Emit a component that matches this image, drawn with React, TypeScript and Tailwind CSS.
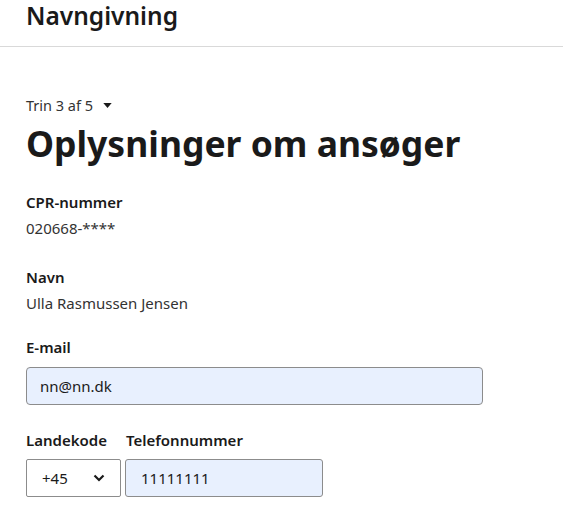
import React from 'react';

const App: React.FC = () => {
    return (
        <div className="min-h-screen bg-white text-[#1a1a1a]" style={{ fontFamily: '"Noto Sans", "Open Sans", Arial, sans-serif' }}>
            {/* Header */}
            <div className="h-[47px] border-b border-[#d9d9d9] px-[26px] pt-[1px]">
                <h1 className="text-[24.5px] font-semibold leading-[30px] text-[#1a1a1a]">Navngivning</h1>
            </div>

            <div className="px-[26px] pt-[48px]">
                {/* Step indicator */}
                <button className="flex items-center gap-[10px] text-[14.5px] leading-[20px] text-[#333]">
                    Trin 3 af 5
                    <svg width="9" height="5" viewBox="0 0 10 6">
                        <path d="M0 0h10L5 6z" fill="#1a1a1a" />
                    </svg>
                </button>

                <h2 className="mt-[6px] text-[35.5px] font-bold leading-[44px]">Oplysninger om ansøger</h2>

                {/* Applicant info */}
                <div className="mt-[25px]">
                    <div className="text-[15px] font-semibold leading-[24px]">CPR-nummer</div>
                    <div className="mt-[2px] text-[15px] leading-[24px] text-[#333]">020668-****</div>
                </div>
                <div className="mt-[25px]">
                    <div className="text-[15px] font-semibold leading-[24px]">Navn</div>
                    <div className="mt-[2px] text-[15px] leading-[24px] text-[#333]">Ulla Rasmussen Jensen</div>
                </div>
                <div className="mt-[20px]">
                    <div className="text-[15px] font-semibold leading-[24px]">E-mail</div>
                    <input
                        readOnly
                        value="nn@nn.dk"
                        className="mt-[8px] block h-[38px] w-[457px] rounded-[4px] border border-[#8c8c8c] bg-[#e8f0fe] px-[13px] text-[15px] text-[#1a1a1a] outline-none"
                    />
                </div>

                {/* Phone */}
                <div className="mt-[23px] flex gap-[4px]">
                    <div>
                        <div className="text-[15px] font-semibold leading-[24px]">Landekode</div>
                        <div className="mt-[7px] flex h-[38px] w-[95px] items-center justify-between rounded-[2px] border border-[#8c8c8c] bg-white pl-[15px] pr-[15px] text-[15px]">
                            <span>+45</span>
                            <svg width="12" height="8" viewBox="0 0 12 8" fill="none">
                                <path d="M1.5 1.5L6 6l4.5-4.5" stroke="#1a1a1a" strokeWidth="2.2" />
                            </svg>
                        </div>
                    </div>
                    <div>
                        <div className="pl-[1px] text-[15px] font-semibold leading-[24px]">Telefonnummer</div>
                        <input
                            readOnly
                            value="11111111"
                            className="mt-[7px] block h-[38px] w-[198px] rounded-[3px] border border-[#8c8c8c] bg-[#e8f0fe] px-[15px] text-[15px] text-[#1a1a1a] outline-none"
                        />
                    </div>
                </div>
            </div>
        </div>
    );
};

export default App;
